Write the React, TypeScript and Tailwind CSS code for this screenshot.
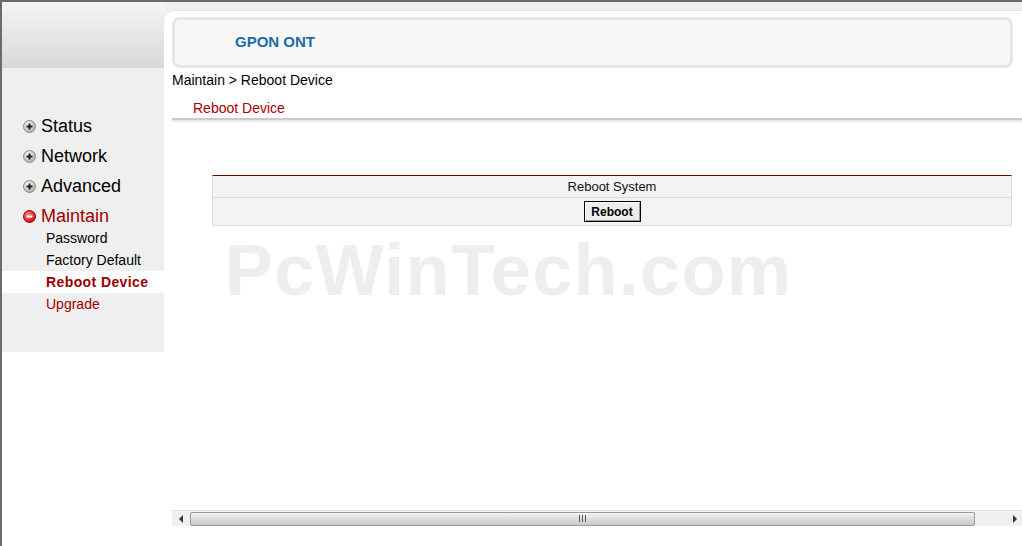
import React from "react"

const font = { fontFamily: '"Liberation Sans", Arial, sans-serif' }

function PlusIcon() {
  return (
    <svg width="13" height="13" viewBox="0 0 13 13" className="shrink-0">
      <defs>
        <radialGradient id="pg" cx="40%" cy="35%" r="70%">
          <stop offset="0%" stopColor="#ffffff" />
          <stop offset="100%" stopColor="#a8a8a8" />
        </radialGradient>
      </defs>
      <circle cx="6.5" cy="6.5" r="6" fill="url(#pg)" stroke="#8a8a8a" strokeWidth="1" />
      <path d="M3.5 6.5h6M6.5 3.5v6" stroke="#222" strokeWidth="2" />
    </svg>
  )
}

function MinusIcon() {
  return (
    <svg width="13" height="13" viewBox="0 0 13 13" className="shrink-0">
      <defs>
        <radialGradient id="mg" cx="40%" cy="35%" r="70%">
          <stop offset="0%" stopColor="#ff8a8a" />
          <stop offset="100%" stopColor="#c40000" />
        </radialGradient>
      </defs>
      <circle cx="6.5" cy="6.5" r="6" fill="url(#mg)" stroke="#a00000" strokeWidth="1" />
      <path d="M3.5 6.5h6" stroke="#fff" strokeWidth="2" />
    </svg>
  )
}

function MenuItem({ label, open }: { label: string; open?: boolean }) {
  return (
    <div className="flex items-center gap-[5px] h-[30px] pl-[21px]">
      {open ? <MinusIcon /> : <PlusIcon />}
      <span className={`text-[18px] ${open ? "text-[#a00000]" : "text-black"}`}>{label}</span>
    </div>
  )
}

function SubItem({ label, active, red }: { label: string; active?: boolean; red?: boolean }) {
  return (
    <div
      className={`h-[22px] leading-[22px] pl-[44px] text-[14px] ${
        active ? "bg-white font-bold text-[#990000] tracking-[0.4px]" : red ? "text-[#a00000]" : "text-black"
      }`}
    >
      {label}
    </div>
  )
}

function Scrollbar() {
  return (
    <div className="h-[16px] flex items-center bg-[#f0f0f0] border-t border-[#e4e4e4]">
      <div className="w-[18px] flex items-center justify-center">
        <svg width="5" height="8" viewBox="0 0 5 8">
          <path d="M4 0L0 4l4 4z" fill="#333" />
        </svg>
      </div>
      <div className="flex-1 h-[14px] rounded-[2px] border border-[#9a9a9a] bg-gradient-to-b from-[#f4f4f4] via-[#dedede] to-[#c9c9c9] flex items-center justify-center">
        <div className="flex gap-[2px]">
          <div className="w-px h-[7px] bg-[#555]" />
          <div className="w-px h-[7px] bg-[#555]" />
          <div className="w-px h-[7px] bg-[#555]" />
        </div>
      </div>
      <div className="w-[47px] flex items-center justify-end pr-[5px]">
        <svg width="5" height="8" viewBox="0 0 5 8">
          <path d="M1 0l4 4-4 4z" fill="#333" />
        </svg>
      </div>
    </div>
  )
}

export default function App() {
  return (
    <div
      className="w-[1022px] h-[546px] flex border-t-2 border-l-2 border-[#6b6b6b] bg-white overflow-hidden"
      style={font}
    >
      {/* Sidebar */}
      <div className="w-[162px] shrink-0 flex flex-col">
        <div className="h-[66px] bg-gradient-to-b from-[#f5f5f5] to-[#d8d8d8]" />
        <div className="h-[284px] bg-[#efefef] pt-[43px]">
          <MenuItem label="Status" />
          <MenuItem label="Network" />
          <MenuItem label="Advanced" />
          <MenuItem label="Maintain" open />
          <div className="-mt-[4px]">
            <SubItem label="Password" />
            <SubItem label="Factory Default" />
            <SubItem label="Reboot Device" active />
            <SubItem label="Upgrade" red />
          </div>
        </div>
      </div>

      {/* Main */}
      <div className="flex-1 flex flex-col bg-[#f0f0f0] pt-[8px]">
        <div className="flex-1 flex flex-col bg-white rounded-tl-[10px] border-t border-[#e2e2e2] pl-[8px] pt-[6px] pb-[20px]">
          <div className="w-[841px] h-[51px] rounded-[8px] border-[3px] border-[#e6e6e6] bg-[#f7f7f7] flex items-center pl-[60px]">
            <span className="text-[15px] font-bold text-[#1b6ca3]">GPON ONT</span>
          </div>

          <div className="mt-[4px] h-[16px] leading-[16px] text-[14px] text-black">Maintain &gt; Reboot Device</div>
          <div className="mt-[12px] h-[16px] leading-[16px] pl-[21px] text-[14px] text-[#aa0000]">Reboot Device</div>
          <div className="mt-[2px]">
            <div className="h-[2px] bg-[#cacaca]" />
            <div className="h-[2px] bg-[#e8e8e8]" />
          </div>

          <div className="mt-[53px] ml-[40px] w-[800px] border-t border-t-[#7a0000] border-x border-b border-[#dcdcdc] bg-[#f3f3f3]">
            <div className="h-[22px] flex items-center justify-center text-[13px] text-[#111] border-b border-[#dcdcdc]">
              Reboot System
            </div>
            <div className="h-[27px] flex items-center justify-center">
              <button className="w-[57px] h-[21px] border border-black bg-[#ececec] shadow-[inset_1px_1px_0_#ffffff,inset_-1px_-1px_0_#9a9a9a] text-[12px] font-bold text-black">
                Reboot
              </button>
            </div>
          </div>

          <div className="mt-[8px] ml-[53px] text-[72px] leading-none font-bold tracking-[1.3px] text-[#eeeeee] select-none">
            PcWinTech.com
          </div>

          <div className="flex-1" />
          <Scrollbar />
        </div>
      </div>
    </div>
  )
}
